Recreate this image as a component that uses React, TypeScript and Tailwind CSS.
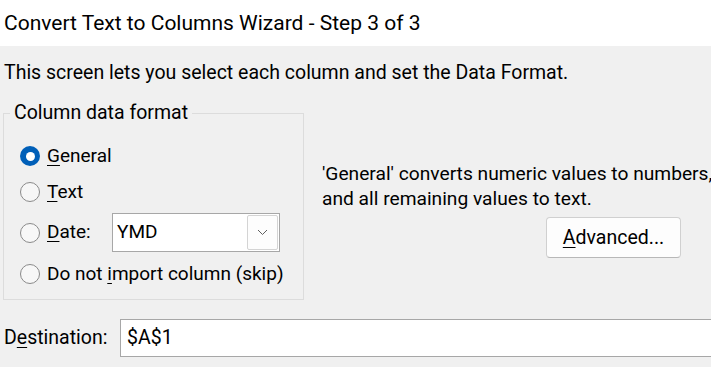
export default function App() {
  const font = "font-['Segoe_UI','Roboto','Noto_Sans',sans-serif]"

  return (
    <div className={`w-[711px] h-[367px] overflow-hidden bg-[#f0f0f0] text-black ${font}`}>
      {/* Title bar */}
      <div className="h-[46px] bg-white flex items-center px-[4px]">
        <span className="text-[21px] leading-none">Convert Text to Columns Wizard - Step 3 of 3</span>
      </div>

      <p className="mt-[15px] px-[4px] text-[19.5px] leading-[24px]">
        This screen lets you select each column and set the Data Format.
      </p>

      <div className="mt-[16px] flex">
        {/* Column data format group */}
        <fieldset className="shrink-0 min-w-0 ml-[3px] w-[301px] h-[199px] border border-[#dcdcdc] px-[16px] pt-[13px] whitespace-nowrap text-[19px]">
          <legend className="-ml-[10px] px-[4px] text-[19.5px] leading-[24px]">Column data format</legend>

          <div className="h-[36px] flex items-center gap-[7px]">
            <span className="w-[20px] h-[20px] rounded-full bg-[#005fb8] flex items-center justify-center">
              <span className="w-[9px] h-[9px] rounded-full bg-white" />
            </span>
            <span>
              <u className="underline-offset-[3px]">G</u>eneral
            </span>
          </div>

          <div className="h-[36px] flex items-center gap-[7px]">
            <span className="w-[20px] h-[20px] rounded-full border border-[#8a8a8a] bg-[#f7f7f7]" />
            <span>
              <u className="underline-offset-[3px]">T</u>ext
            </span>
          </div>

          <div className="mt-[2px] h-[41px] flex items-center">
            <span className="w-[20px] h-[20px] rounded-full border border-[#8a8a8a] bg-[#f7f7f7]" />
            <span className="ml-[7px] w-[65px]">
              <u className="underline-offset-[3px]">D</u>ate:
            </span>
            <div className="w-[168px] h-[39px] border border-[#a7a7a7] bg-white flex items-center justify-between pl-[4px] pr-[1px]">
              <span>YMD</span>
              <span className="w-[31px] h-[35px] border border-[#d4d4d4] rounded-[2px] bg-[#fdfdfd] flex items-center justify-center">
                <svg width="11" height="7" viewBox="0 0 11 7" fill="none">
                  <path d="M1 1l4.5 4.5L10 1" stroke="#606060" strokeWidth="1" />
                </svg>
              </span>
            </div>
          </div>

          <div className="h-[42px] flex items-center gap-[7px]">
            <span className="shrink-0 w-[20px] h-[20px] rounded-full border border-[#8a8a8a] bg-[#f7f7f7]" />
            <span>
              Do not <u className="underline-offset-[3px]">i</u>mport column (skip)
            </span>
          </div>
        </fieldset>

        {/* Description + Advanced */}
        <div className="ml-[18px] pt-[60px] flex flex-col">
          <p className="text-[19.2px] leading-[25px] whitespace-nowrap">
            'General' converts numeric values to numbers,
            <br />
            and all remaining values to text.
          </p>
          <button className="mt-[6px] ml-[224px] w-[135px] h-[41px] rounded-[4px] border border-[#d0d0d0] border-b-[#b8b8b8] bg-[#fdfdfd] text-[19.5px]">
            <u className="underline-offset-[3px]">A</u>dvanced...
          </button>
        </div>
      </div>

      {/* Destination */}
      <div className="mt-[19px] flex items-center">
        <span className="w-[120px] pl-[4px] text-[19.5px]">
          D<u className="underline-offset-[3px]">e</u>stination:
        </span>
        <div className="flex-1 h-[38px] border border-[#a7a7a7] bg-white flex items-center px-[6px] text-[19.5px] -mr-[10px]">
          $A$1
        </div>
      </div>
    </div>
  )
}
